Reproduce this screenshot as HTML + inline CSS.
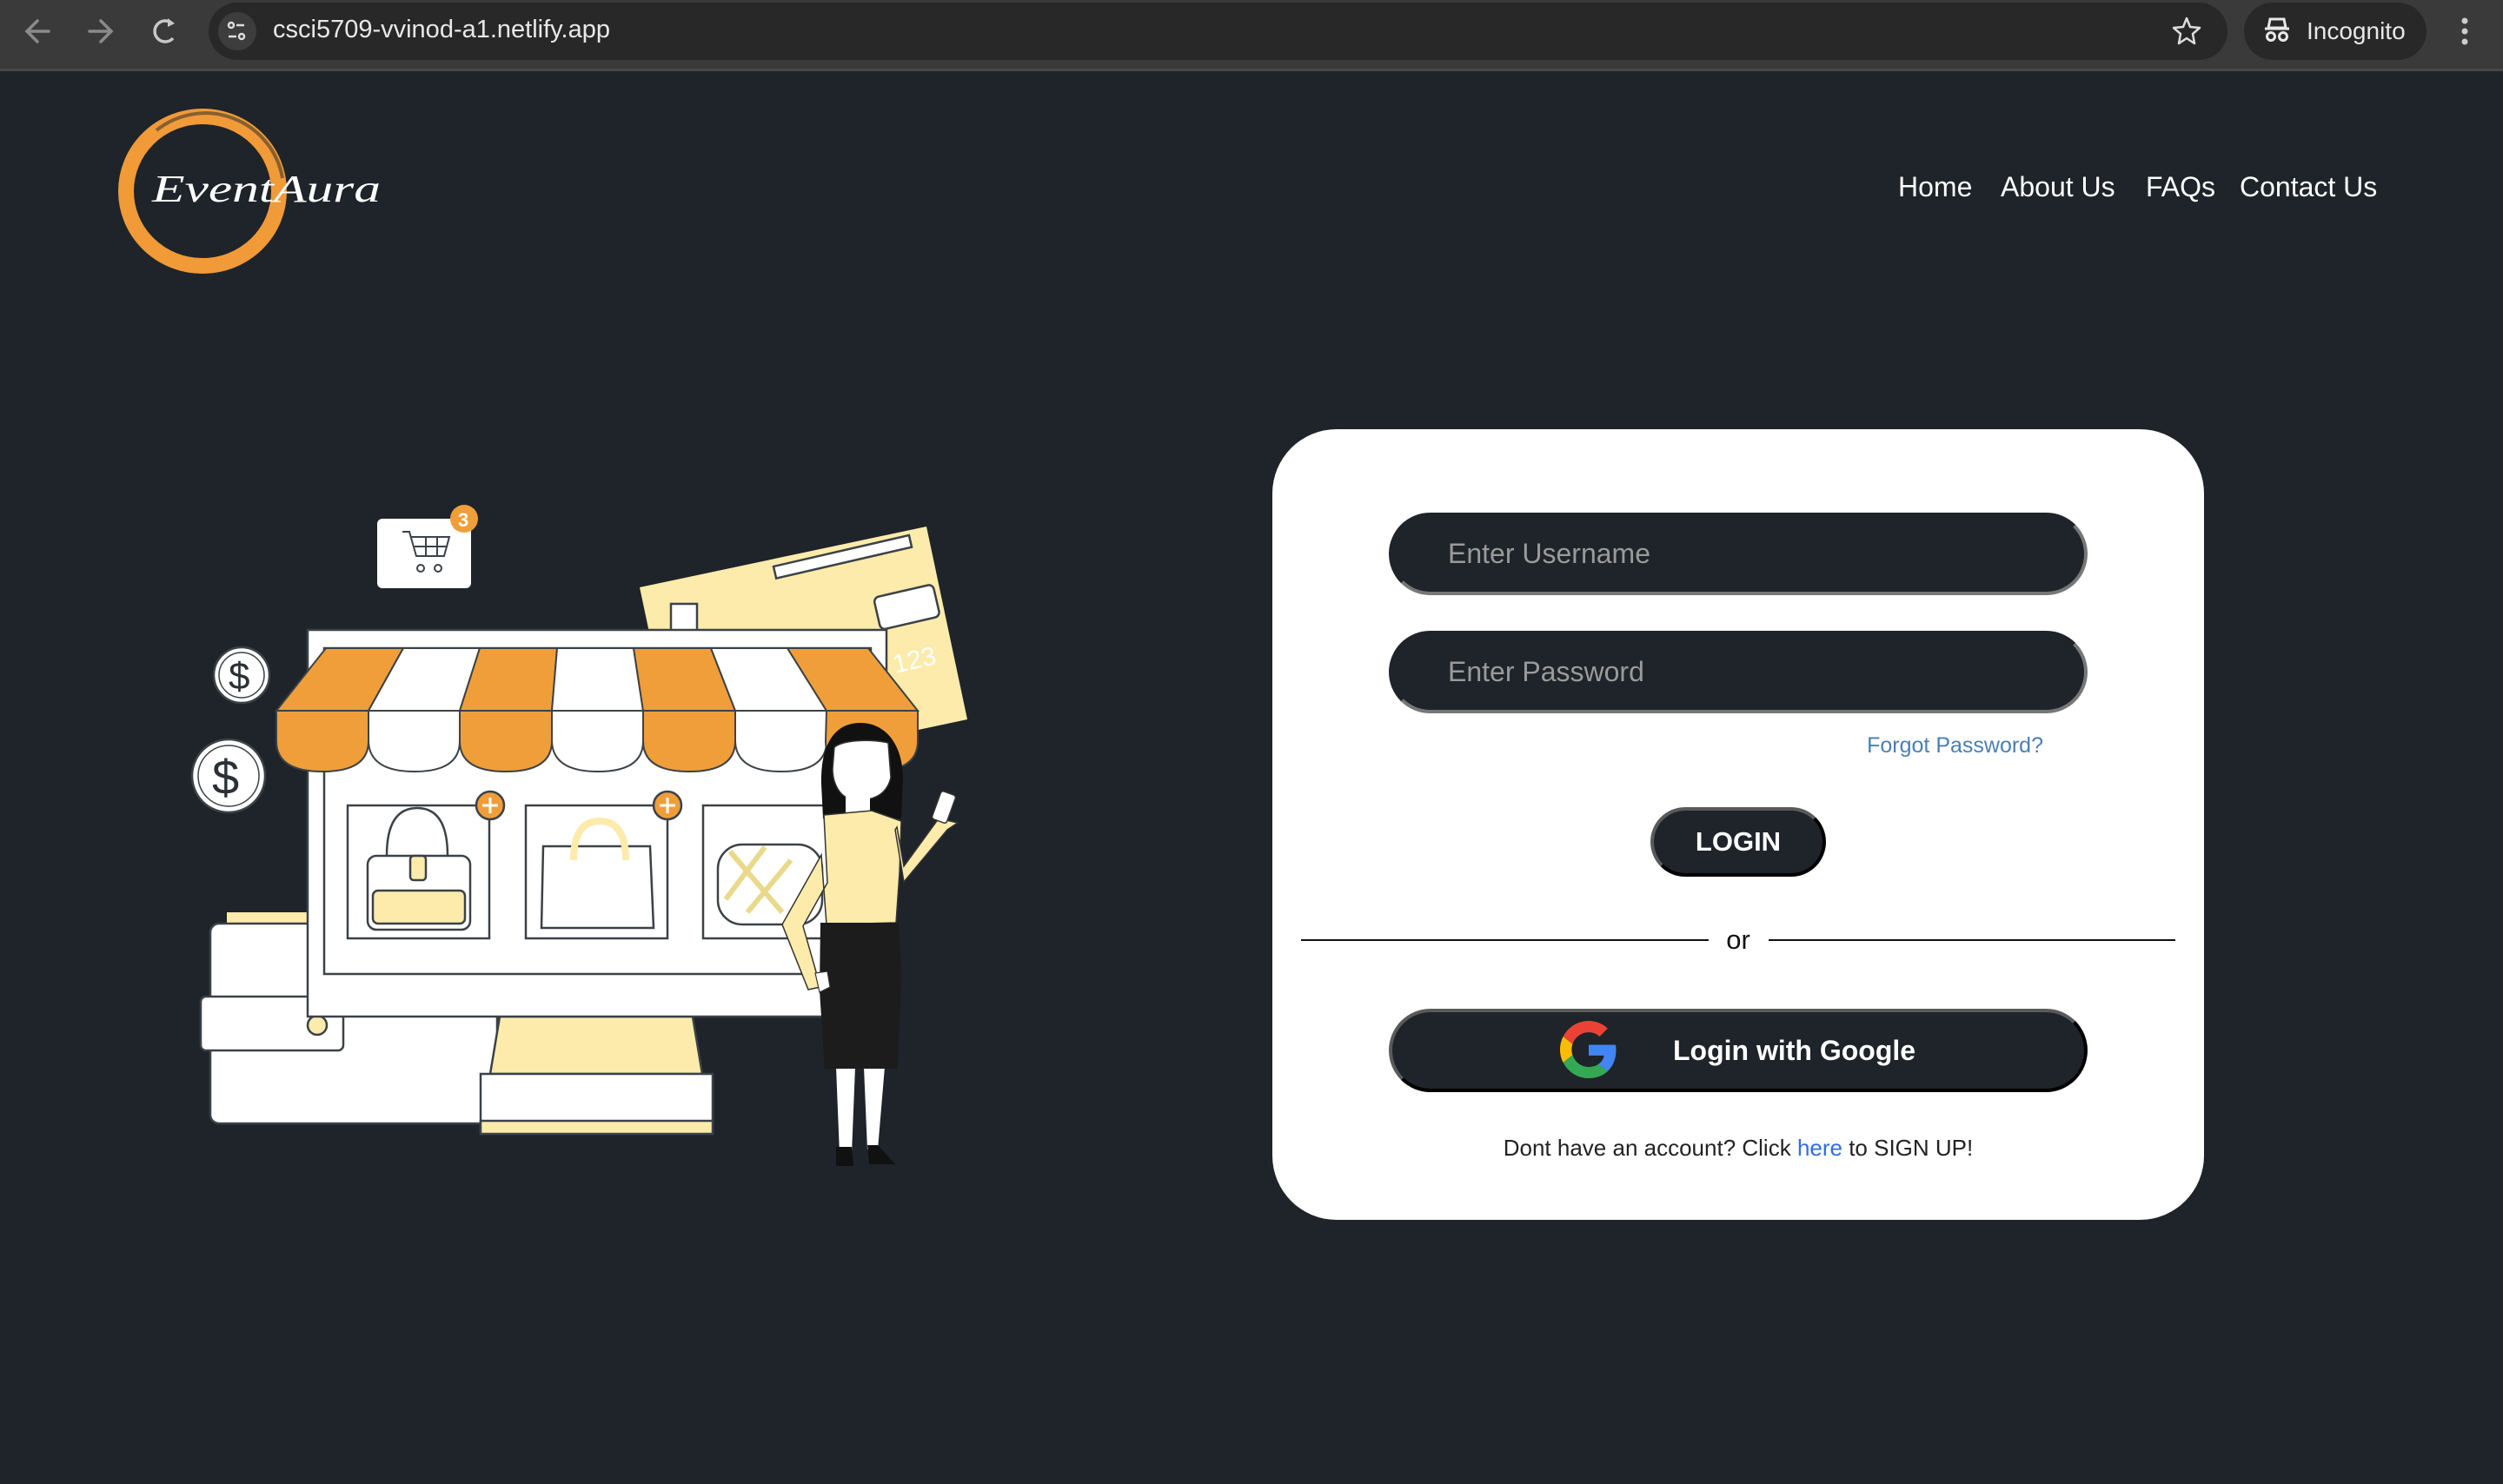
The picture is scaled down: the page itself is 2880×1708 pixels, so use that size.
<!DOCTYPE html>
<html><head><meta charset="utf-8"><style>
*{margin:0;padding:0;box-sizing:border-box}
body{width:2880px;height:1708px;overflow:hidden;background:#1e2429;font-family:"Liberation Sans",sans-serif;position:relative}
.abs{position:absolute}
.chrome{left:0;top:0;width:2880px;height:82px;background:#3a3a3a;border-bottom:3px solid #474747}
.pill{background:#282828;border-radius:34px;top:3px;height:66px}
.nav a{position:absolute;top:197px;color:#fff;font-size:32px;text-decoration:none;white-space:nowrap}
.card{left:1464px;top:494px;width:1072px;height:910px;background:#fff;border-radius:74px}
.inp{position:absolute;left:134px;width:804px;height:95px;background:#1e2429;border-radius:48px;border:4px solid;border-color:#1e2429 #777 #777 #1e2429;color:#9a9a9a;font-size:32px;padding-left:64px;line-height:86px}
.btn{position:absolute;background:#1e2429;color:#fff;font-weight:bold;border:4px solid;border-color:#5a5a5a #000 #000 #5a5a5a;text-align:center}
</style></head><body>
<div class="abs chrome"></div>
<svg class="abs" style="left:0;top:0" width="240" height="80">
<g stroke="#8a8a8a" stroke-width="3.5" fill="none" stroke-linecap="round">
<path d="M56 36H32M43 24L31 36L43 48"/><path d="M103 36H127M116 24L128 36L116 48" /></g>
<path d="M198 27A12 12 0 1 0 199 44" stroke="#c8c8c8" stroke-width="3.5" fill="none"/><path d="M193 21L201 27L193 31Z" fill="#c8c8c8"/>
</svg>
<div class="abs pill" style="left:240px;width:2323px"></div>
<svg class="abs" style="left:248px;top:12px" width="50" height="50"><circle cx="25" cy="24" r="22" fill="#3d3d3d"/><g stroke="#ddd" stroke-width="2.5" fill="none"><circle cx="18" cy="17" r="3"/><path d="M24 17H33M15 30H24"/><circle cx="30" cy="30" r="3"/></g></svg>
<div class="abs" style="left:314px;top:18px;color:#e8e8e8;font-size:29px">csci5709-vvinod-a1.netlify.app</div>
<svg class="abs" style="left:2498px;top:18px" width="36" height="36"><path d="M18 3L22 13L33 14L25 21L27 32L18 26L9 32L11 21L3 14L14 13Z" fill="none" stroke="#ddd" stroke-width="2.5" stroke-linejoin="round"/></svg>
<div class="abs pill" style="left:2582px;width:210px"></div>
<svg class="abs" style="left:2604px;top:18px" width="32" height="32"><path d="M8 4H24L26 14H6Z M2 15H30" stroke="#e8e8e8" stroke-width="3" fill="none"/><circle cx="9" cy="24" r="4.5" stroke="#e8e8e8" stroke-width="3" fill="none"/><circle cx="23" cy="24" r="4.5" stroke="#e8e8e8" stroke-width="3" fill="none"/></svg>
<div class="abs" style="left:2654px;top:20px;color:#e8e8e8;font-size:28px">Incognito</div>
<svg class="abs" style="left:2826px;top:18px" width="20" height="36"><g fill="#ccc"><circle cx="10" cy="6" r="3.5"/><circle cx="10" cy="18" r="3.5"/><circle cx="10" cy="30" r="3.5"/></g></svg>

<!-- logo -->
<svg class="abs" style="left:120px;top:110px" width="340" height="220">
<ellipse cx="113" cy="110" rx="88" ry="86" fill="none" stroke="#f09a38" stroke-width="18"/>
<path d="M60 40 A90 90 0 0 1 205 95" fill="none" stroke="#1e2429" stroke-width="4" opacity=".5"/>
<text x="55" y="122" fill="#fff" font-family="Liberation Serif,serif" font-style="italic" font-size="44" textLength="263" lengthAdjust="spacingAndGlyphs">EventAura</text>
</svg>

<div class="nav"><a style="left:2184px">Home</a><a style="left:2302px">About Us</a><a style="left:2469px">FAQs</a><a style="left:2577px">Contact Us</a></div>

<!-- illustration -->
<svg class="abs" style="left:0;top:0" width="1200" height="1400" viewBox="0 0 1200 1400">
<g stroke="#3b4248" stroke-width="2.5">
<polygon points="736,676 1066,606 1113,828 783,898" fill="#fcebaa" stroke="none"/>
<rect x="890" y="652" width="160" height="14" fill="#fff" transform="rotate(-13 890 652)"/>
<rect x="772" y="695" width="30" height="40" fill="#fff"/>
<rect x="1005" y="688" width="70" height="38" rx="6" fill="#fff" transform="rotate(-13 1005 688)"/>
<text x="1030" y="775" fill="#fff" stroke="none" font-size="30" transform="rotate(-13 1030 775)">123</text>
<rect x="434" y="597" width="108" height="80" rx="6" fill="#fff" stroke="none"/>
<path d="M463 612h8l8 28h32l6-22h-44M477 629h38M490 618v22M503 618v22" fill="none" stroke-width="2"/><circle cx="484" cy="654" r="4" fill="none" stroke-width="2"/><circle cx="504" cy="654" r="4" fill="none" stroke-width="2"/>
<circle cx="534" cy="597" r="16" fill="#f09e3a" stroke="none"/><text x="527" y="606" fill="#fff" stroke="none" font-size="22" font-weight="bold">3</text>
<circle cx="278" cy="777" r="32" fill="#fff"/><circle cx="278" cy="777" r="26" fill="none" stroke-width="1.5"/><text x="263" y="793" font-size="44" fill="#2a3036" stroke="none">$</text>
<circle cx="263" cy="893" r="42" fill="#fff"/><circle cx="263" cy="893" r="35" fill="none" stroke-width="1.5"/><text x="244" y="914" font-size="56" fill="#2a3036" stroke="none">$</text>
<rect x="261" y="1050" width="100" height="20" fill="#fcebaa" stroke="none"/>
<rect x="242" y="1063" width="330" height="230" rx="10" fill="#fff"/>
<rect x="231" y="1147" width="164" height="62" rx="6" fill="#fff"/>
<circle cx="365" cy="1180" r="11" fill="#fcebaa"/>
<polygon points="575,1170 797,1170 808,1236 564,1236" fill="#fcebaa"/>
<rect x="553" y="1236" width="267" height="69" fill="#fff"/>
<rect x="553" y="1290" width="267" height="15" fill="#fcebaa"/>
<rect x="354" y="725" width="666" height="445" fill="#fff"/>
<rect x="373" y="746" width="629" height="375" fill="#fff"/>
<rect x="400" y="927" width="163" height="153" fill="#fff"/>
<rect x="605" y="927" width="163" height="153" fill="#fff"/>
<rect x="809" y="927" width="163" height="153" fill="#fff"/>
<rect x="423" y="985" width="118" height="85" rx="10" fill="#fff"/><path d="M445 985q0-55 35-55t35 55" fill="none"/><rect x="429" y="1025" width="106" height="38" rx="6" fill="#fcebaa"/><rect x="472" y="985" width="18" height="28" rx="4" fill="#fcebaa"/>
<polygon points="625,974 748,974 752,1068 623,1068" fill="#fff"/><path d="M660 990q0-45 30-45t30 45" fill="none" stroke="#fcebaa" stroke-width="8"/>
<rect x="826" y="972" width="120" height="92" rx="28" fill="#fff"/><path d="M840 980l60 70M880 975l-45 60M910 990l-50 60" stroke="#e9d98a" stroke-width="6"/>
<circle cx="564" cy="927" r="16" fill="#f09e3a"/><path d="M564 918v18M555 927h18" stroke="#fff" stroke-width="3"/>
<circle cx="768" cy="927" r="16" fill="#f09e3a"/><path d="M768 918v18M759 927h18" stroke="#fff" stroke-width="3"/>
<!-- awning -->
<g stroke-width="2">
<polygon points="375,746 464,746 424,818 318,818" fill="#f09e3a"/>
<polygon points="464,746 552,746 529,818 424,818" fill="#fff"/>
<polygon points="552,746 641,746 635,818 529,818" fill="#f09e3a"/>
<polygon points="641,746 729,746 740,818 635,818" fill="#fff"/>
<polygon points="729,746 818,746 846,818 740,818" fill="#f09e3a"/>
<polygon points="818,746 906,746 951,818 846,818" fill="#fff"/>
<polygon points="906,746 999,746 1056,818 951,818" fill="#f09e3a"/>
<path d="M318 818h106v35q0 35-53 35t-53-35z" fill="#f09e3a"/>
<path d="M424 818h105v35q0 35-52 35t-53-35z" fill="#fff"/>
<path d="M529 818h106v35q0 35-53 35t-53-35z" fill="#f09e3a"/>
<path d="M635 818h105v35q0 35-52 35t-53-35z" fill="#fff"/>
<path d="M740 818h106v35q0 35-53 35t-53-35z" fill="#f09e3a"/>
<path d="M846 818h105v35q0 35-52 35t-53-35z" fill="#fff"/>
<path d="M951 818h105v35q0 35-53 35t-53-35z" fill="#f09e3a"/>
</g>
</g>
<!-- woman -->
<path d="M962 1228h22l-4 100h-14zM994 1228h24l-8 95h-12z" fill="#fff"/>
<path d="M962 1320h18l2 22h-20zM998 1318h12l20 22h-30z" fill="#111"/>
<path d="M990 832c-30 0-46 25-45 70l2 40h90l2-45c0-40-20-65-49-65z" fill="#111"/>
<path d="M960 860c10-8 40-10 62-5l3 40c-5 22-25 28-45 25-15-3-22-20-22-35z" fill="#fff" stroke="#333" stroke-width="1.5"/>
<path d="M973 915h28v25h-28z" fill="#fff"/>
<path d="M948 938l55-5 34 12-2 60-4 57-80 2-6-80-45 80 30 75 14-3-20-70 28-50z" fill="#fcebaa" stroke="#333" stroke-width="1.5"/>
<path d="M1030 955l10 60 50-60 12-8-22-5-40 55-8-45z" fill="#fcebaa" stroke="#333" stroke-width="1.5"/>
<path d="M944 1062h90l3 60-4 108h-84l-6-90z" fill="#1c1c1c"/>
<rect x="1077" y="912" width="18" height="34" rx="3" fill="#fff" stroke="#333" stroke-width="1.5" transform="rotate(20 1086 929)"/>
<path d="M938 1120l14-2 3 18-12 6z" fill="#fff" stroke="#333" stroke-width="1.2"/>
</svg>

<!-- card -->
<div class="abs card">
<div class="inp" style="top:96px">Enter Username</div>
<div class="inp" style="top:232px">Enter Password</div>
<div class="abs" style="right:185px;top:350px;color:#4a7fb5;font-size:25px">Forgot Password?</div>
<div class="btn" style="left:435px;top:435px;width:202px;height:80px;border-radius:40px;font-size:31px;line-height:72px">LOGIN</div>
<div class="abs" style="left:33px;top:587px;width:469px;height:2px;background:#111"></div>
<div class="abs" style="left:571px;top:587px;width:468px;height:2px;background:#111"></div>
<div class="abs" style="left:0;width:1072px;top:570px;text-align:center;font-size:31px;color:#111">or</div>
<div class="btn" style="left:134px;top:667px;width:804px;height:96px;border-radius:48px;font-size:32px;line-height:88px;text-align:left;padding-left:323px">Login with Google</div>
<svg class="abs" style="left:331px;top:681px" width="66" height="66" viewBox="0 0 48 48">
<path fill="#EA4335" d="M24 9.5c3.5 0 6.6 1.2 9.1 3.6l6.8-6.8C35.8 2.4 30.4 0 24 0 14.6 0 6.6 5.4 2.6 13.2l7.9 6.2C12.4 13.7 17.7 9.5 24 9.5z"/>
<path fill="#4285F4" d="M46.9 24.5c0-1.6-.1-3.1-.4-4.5H24v9h12.9c-.6 3-2.3 5.5-4.8 7.2l7.7 6C44.3 38 46.9 31.8 46.9 24.5z"/>
<path fill="#FBBC05" d="M10.5 28.6c-.5-1.4-.8-3-.8-4.6s.3-3.1.8-4.6l-7.9-6.2C.9 16.5 0 20.1 0 24s.9 7.5 2.6 10.8l7.9-6.2z"/>
<path fill="#34A853" d="M24 48c6.5 0 11.9-2.1 15.9-5.8l-7.7-6c-2.2 1.5-5 2.3-8.2 2.3-6.3 0-11.6-4.2-13.5-10l-7.9 6.2C6.6 42.6 14.6 48 24 48z"/>
</svg>
<div class="abs" style="left:0;width:1072px;top:812px;text-align:center;font-size:26px;color:#222">Dont have an account? Click <span style="color:#2f6fe0">here</span> to SIGN UP!</div>
</div>
</body></html>
